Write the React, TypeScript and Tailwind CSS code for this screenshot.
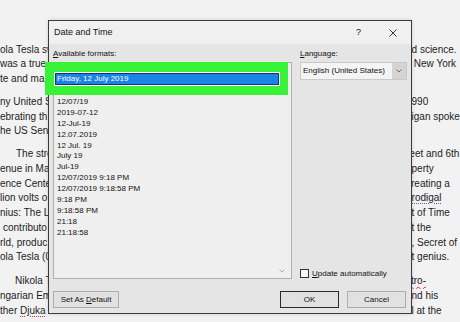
import React from "react";

type Line = { l: string; r?: string; lp?: string; rDeco?: string; lDeco?: boolean };

const paras: { mb: string; lines: Line[] }[] = [
  {
    mb: "mb-[8px]",
    lines: [
      { l: "ola Tesla sw", r: "nd science." },
      { l: "was a true", r: "s New York" },
      { l: "te and ma" },
    ],
  },
  {
    mb: "mb-[8px]",
    lines: [
      { l: "ny United S", r: " 1990" },
      { l: "ebrating th", r: "higan spoke" },
      { l: "he US Sena" },
    ],
  },
  {
    mb: "mb-[9px]",
    lines: [
      { l: "The stre", lp: "pl-[16px]", r: "reet and 6th" },
      { l: "enue in Ma", r: "operty" },
      { l: "ence Cente", r: "creating a" },
      { l: "lion volts o", r: "prodigal", rDeco: "prodigal" },
      { l: "nius: The Li", r: "nt of Time" },
      { l: "contributo", lp: "pl-[3px]", r: "ut the" },
      { l: "rld, produc", r: "e, Secret of" },
      { l: "ola Tesla (0", r: " at genius." },
    ],
  },
  {
    mb: "",
    lines: [
      { l: "Nikola T", lp: "pl-[15px]", r: "stro-", rDeco: "red" },
      { l: "ngarian Em", r: "and his" },
      { l: "ther ", r: "al at the", lDeco: true },
    ],
  },
];

const formats = [
  "12/07/19",
  "2019-07-12",
  "12-Jul-19",
  "12.07.2019",
  "12 Jul. 19",
  "July 19",
  "Jul-19",
  "12/07/2019 9:18 PM",
  "12/07/2019 9:18:58 PM",
  "9:18 PM",
  "9:18:58 PM",
  "21:18",
  "21:18:58",
];

function DocLine({ line }: { line: Line }) {
  return (
    <div className="flex h-[14.75px] leading-[14.75px] whitespace-nowrap">
      <div className={`w-[48px] shrink-0 overflow-hidden ${line.lp ?? ""}`}>
        {line.l}
        {line.lDeco && (
          <span className="underline decoration-dotted decoration-[#d23a3a] underline-offset-2">Djuka</span>
        )}
      </div>
      <div className="ml-[364px] flex-1 overflow-hidden">
        <div className="-ml-[6px]">
          {line.rDeco === "prodigal" ? (
            <span className="underline decoration-dotted decoration-[#4d6fb0] underline-offset-2">{line.r}</span>
          ) : line.rDeco === "red" ? (
            <span className="underline decoration-wavy decoration-[#d23a3a] underline-offset-2">{line.r}</span>
          ) : (
            line.r
          )}
        </div>
      </div>
    </div>
  );
}

export default function App() {
  return (
    <div className="relative w-[460px] h-[322px] overflow-hidden bg-[#f2f2f2] font-['Liberation_Sans',Arial,sans-serif]">
      {/* document */}
      <div className="pt-[42.6px] text-[10px] text-[#1c1c1c]">
        {paras.map((p, i) => (
          <div key={i} className={p.mb}>
            {p.lines.map((ln, j) => (
              <DocLine key={j} line={ln} />
            ))}
          </div>
        ))}
      </div>

      {/* dialog */}
      <div className="absolute left-[48px] top-[20px] w-[364px] h-[294px] border border-[#3b3b3b] bg-[#e5e5e5] flex flex-col shadow-[0_0_4px_rgba(0,0,0,0.15)] text-[#111]">
        <div className="h-[23px] bg-[#f0f0f0] flex items-center pl-[5px] text-[9px]">
          <span>Date and Time</span>
          <span className="ml-auto text-[9px] leading-none mr-[28px]">?</span>
          <svg width="8" height="8" viewBox="0 0 8 8" className="mr-[14px]">
            <path d="M0.5 0.5 L7.5 7.5 M7.5 0.5 L0.5 7.5" stroke="#222" strokeWidth="0.9" fill="none" />
          </svg>
        </div>
        <div className="flex-1 px-[4px] pt-[5px] text-[8px]">
          <div className="flex gap-[8px]">
            <div className="w-[239px] flex flex-col">
              <div className="h-[10px] leading-[10px]">
                <span className="underline underline-offset-1">A</span>vailable formats:
              </div>
              <div className="relative mt-[3px] h-[217px] border border-[#b0b0b0] bg-[#efefef] pt-[34px] pl-[3px]">
                {formats.map((f) => (
                  <div key={f} className="h-[10.9px] leading-[10.9px] whitespace-nowrap">
                    {f}
                  </div>
                ))}
                <svg width="6" height="4" viewBox="0 0 6 4" className="absolute right-[6px] bottom-[5px]">
                  <path d="M0.5 0.5 L3 3 L5.5 0.5" stroke="#9a9a9a" strokeWidth="0.8" fill="none" />
                </svg>
              </div>
            </div>
            <div className="w-[107px] flex flex-col">
              <div className="h-[10px] leading-[10px]">
                <span className="underline underline-offset-1">L</span>anguage:
              </div>
              <div className="mt-[3px] h-[18px] flex border border-[#c9c9c9] bg-[#f4f4f4]">
                <div className="flex-1 flex items-center pl-[2px] whitespace-nowrap">English (United States)</div>
                <div className="w-[14px] bg-[#d4d4d4] flex items-center justify-center">
                  <svg width="6" height="4" viewBox="0 0 6 4">
                    <path d="M0.5 0.5 L3 3 L5.5 0.5" stroke="#555" strokeWidth="0.8" fill="none" />
                  </svg>
                </div>
              </div>
              <div className="mt-auto mb-[1px] flex items-center gap-[3px] h-[9px]">
                <div className="w-[9px] h-[9px] border border-[#333] bg-[#f6f6f6]" />
                <span className="whitespace-nowrap leading-[9px]">
                  <span className="underline underline-offset-1">U</span>pdate automatically
                </span>
              </div>
            </div>
          </div>
          <div className="mt-[12px] flex h-[17px]">
            <div className="w-[66px] border border-[#adadad] bg-[#e1e1e1] flex items-center justify-center whitespace-nowrap">
              Set As&nbsp;<span className="underline underline-offset-1">D</span>efault
            </div>
            <div className="ml-auto w-[59px] border border-[#2a2a2a] bg-[#e1e1e1] flex items-center justify-center">
              OK
            </div>
            <div className="ml-[8px] mr-[1px] w-[59px] border border-[#adadad] bg-[#e1e1e1] flex items-center justify-center">
              Cancel
            </div>
          </div>
        </div>
      </div>

      {/* green highlight over first format */}
      <div className="absolute left-[45px] top-[62px] w-[243px] h-[33px] bg-[#38f238] pt-[10px] pl-[9px]">
        <div className="w-[226px] h-[14px] border border-white">
          <div className="h-full border border-[#1b355e] bg-[#1a84e6] text-white text-[8px] leading-[10px] pl-[1px] whitespace-nowrap">
            Friday, 12 July 2019
          </div>
        </div>
      </div>
    </div>
  );
}
